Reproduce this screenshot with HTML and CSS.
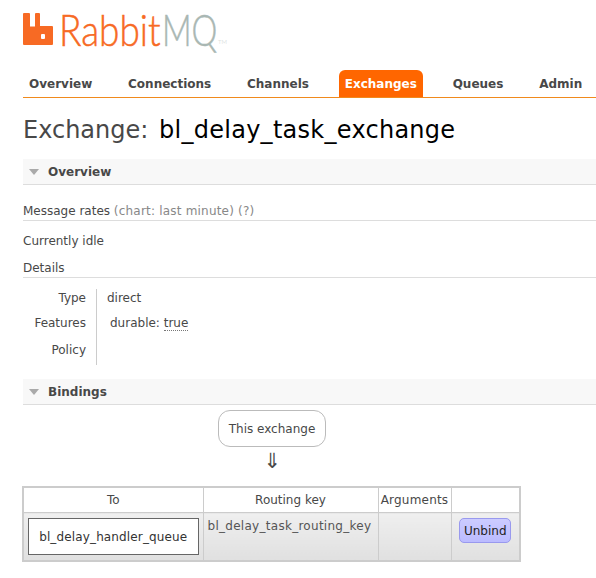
FILE: index.html
```html
<!DOCTYPE html>
<html lang="en">
<head>
<meta charset="utf-8">
<title>RabbitMQ Management</title>
<link rel="stylesheet" href="styles.css">
</head>
<body>
<header class="logo">
  <svg class="logo-icon" width="30" height="32" viewBox="0 0 30 32"><path fill="#f76a24" fill-rule="evenodd" d="M0 1Q0 0 1 0H6Q7 0 7 1V13.500H12V1Q12 0 13 0H16Q17 0 17 1V13H29Q30 13 30 14V31Q30 32 29 32H1Q0 32 0 31ZM19 21Q18 21 18 22V25Q18 26 19 26H21Q22 26 22 25V22Q22 21 21 21Z"/></svg>
  <span class="logo-rabbit">Rabbit</span><span class="logo-mq">MQ</span><span class="logo-tm">TM</span>
</header>
<nav class="tabs">
  <a class="tab">Overview</a>
  <a class="tab">Connections</a>
  <a class="tab">Channels</a>
  <a class="tab tab-active">Exchanges</a>
  <a class="tab">Queues</a>
  <a class="tab">Admin</a>
</nav>
<h1 class="title">Exchange: <b>bl_delay_task_exchange</b></h1>

<h2 class="section-head section-overview"><i class="tri"></i>Overview</h2>
<div class="sub-head rates">Message rates <span class="muted">(chart: last minute) (?)</span></div>
<p class="idle">Currently idle</p>
<div class="sub-head details">Details</div>
<dl class="facts">
  <div class="fact fact-type"><dt>Type</dt><dd>direct</dd></div>
  <div class="fact fact-features"><dt>Features</dt><dd class="indent">durable: <abbr>true</abbr></dd></div>
  <div class="fact fact-policy"><dt>Policy</dt><dd></dd></div>
</dl>

<h2 class="section-head section-bindings"><i class="tri"></i>Bindings</h2>
<div class="flow">
  <div class="bubble">This exchange</div>
  <div class="arrow">⇓</div>
</div>
<table class="bindings">
  <thead>
    <tr><th class="col-to">To</th><th class="col-key">Routing key</th><th class="col-args">Arguments</th><th class="col-act"></th></tr>
  </thead>
  <tbody>
    <tr>
      <td class="cell-to"><div class="queue-box">bl_delay_handler_queue</div></td>
      <td class="cell-key">bl_delay_task_routing_key</td>
      <td></td>
      <td class="cell-act"><button class="unbind">Unbind</button></td>
    </tr>
  </tbody>
</table>
</body>
</html>
```
FILE: styles.css
```css
html, body { margin: 0; padding: 0; background: #fff; }
body {
  width: 573px;
  height: 578px;
  padding-left: 23px;
  overflow: hidden;
  font-family: "DejaVu Sans", Verdana, sans-serif;
  font-size: 12px;
  color: #484848;
}

.logo {
  display: flex;
  align-items: flex-start;
  height: 70px;
  padding-top: 13px;
  box-sizing: border-box;
  font-family: Lato, sans-serif;
  font-weight: 300;
  line-height: 32px;
}
.logo-icon { flex: none; margin-right: 6px; }
.logo-rabbit, .logo-mq {
  display: block;
  flex: none;
  font-size: 44px;
  transform-origin: left center;
  -webkit-text-stroke: 0.5px currentColor;
}
.logo-rabbit { width: 103px; color: #f76a24; transform: scaleX(0.84); }
.logo-mq { width: 56px; color: #a9b7b3; transform: scaleX(0.74); }
.logo-tm { color: #c5cdca; font-size: 6px; line-height: 8px; margin-top: 25px; }

.tabs {
  display: flex;
  gap: 23.800px;
  height: 27px;
  border-bottom: 1px solid #f08a1d;
  font-weight: 700;
  font-size: 12px;
  color: #484848;
}
.tab { display: block; padding: 0 6px; line-height: 28px; white-space: nowrap; }
.tab-active {
  background: #f60;
  color: #fff;
  border-radius: 6px 6px 0 0;
}

.title {
  margin: 18px 0 0;
  font-size: 24px;
  line-height: 28px;
  font-weight: 400;
  color: #484848;
}
.title b { font-weight: 400; color: #000; letter-spacing: 0.27px; margin-left: 3px; }

.section-head {
  display: flex;
  align-items: center;
  height: 25px;
  margin: 0;
  padding-left: 6px;
  background: #f8f8f8;
  border-bottom: 1px solid #ddd;
  font-size: 12px;
  font-weight: 700;
  color: #484848;
}
.section-overview { margin-top: 15px; }
.section-bindings { margin-top: 14px; }
.tri {
  width: 0;
  height: 0;
  margin-right: 9px;
  border-style: solid;
  border-width: 6px 5.500px 0;
  border-color: #aaa transparent transparent;
}

.sub-head {
  height: 17px;
  line-height: 16px;
  border-bottom: 1px solid #ddd;
}
.rates { margin-top: 18px; }
.details { margin-top: 11px; }
.muted { color: #888; letter-spacing: 0.2px; }
.idle { margin: 12px 0 0; line-height: 16px; }

.facts { margin: 11px 0 0; }
.fact { display: flex; }
.fact dt { width: 63px; text-align: right; color: #484848; padding-right: 10px; border-right: 1px solid #ccc; }
.fact dd { margin: 0; padding-left: 10px; }
.fact-type { height: 25px; line-height: 19px; }
.fact-features { height: 27px; line-height: 19px; }
.fact-policy { height: 24px; line-height: 19px; }
.indent { position: relative; left: 3px; }
abbr { border-bottom: 1px dotted #777; }

.flow { display: flex; flex-direction: column; align-items: flex-start; padding: 5px 0 0 195px; }
.bubble {
  width: 106px;
  height: 35px;
  line-height: 36px;
  text-align: center;
  border: 1px solid #bbb;
  border-radius: 12px;
}
.arrow { width: 108px; height: 39px; text-align: center; font-size: 21px; line-height: 29px; color: #484848; }

.bindings {
  border-collapse: collapse;
  border: 2px solid #ccc;
  width: 499px;
  margin-left: -1px;
  table-layout: fixed;
}
.bindings th, .bindings td { border: 1px solid #ccc; padding: 0; box-sizing: border-box; }
.bindings th { height: 25px; font-weight: 400; font-size: 12px; text-align: center; background: #fff; line-height: 24px; }
.bindings td { height: 48px; vertical-align: top; background: linear-gradient(#efefef, #e0e0e0); }
.col-to { width: 180px; }
.col-key { width: 175px; }
.col-args { width: 73px; letter-spacing: 0.2px; }
.bindings .cell-to { padding: 5px 4px 4px 4px; }
.queue-box {
  height: 37px;
  box-sizing: border-box;
  border: 1px solid #666;
  background: #fff;
  text-align: center;
  line-height: 36px;
  color: #333;
  letter-spacing: 0.14px;
}
.bindings .cell-key { padding: 6px 0 0 4px; line-height: 14px; white-space: nowrap; color: #555; letter-spacing: 0.28px; }
.bindings .cell-act { text-align: center; padding-top: 5px; }
.unbind {
  width: 52px;
  height: 25px;
  padding: 0;
  font: inherit;
  line-height: 25px;
  color: #222;
  background: linear-gradient(#ccccff, #bbbbff);
  border: 1px solid #9999ee;
  border-radius: 5px;
}
```
